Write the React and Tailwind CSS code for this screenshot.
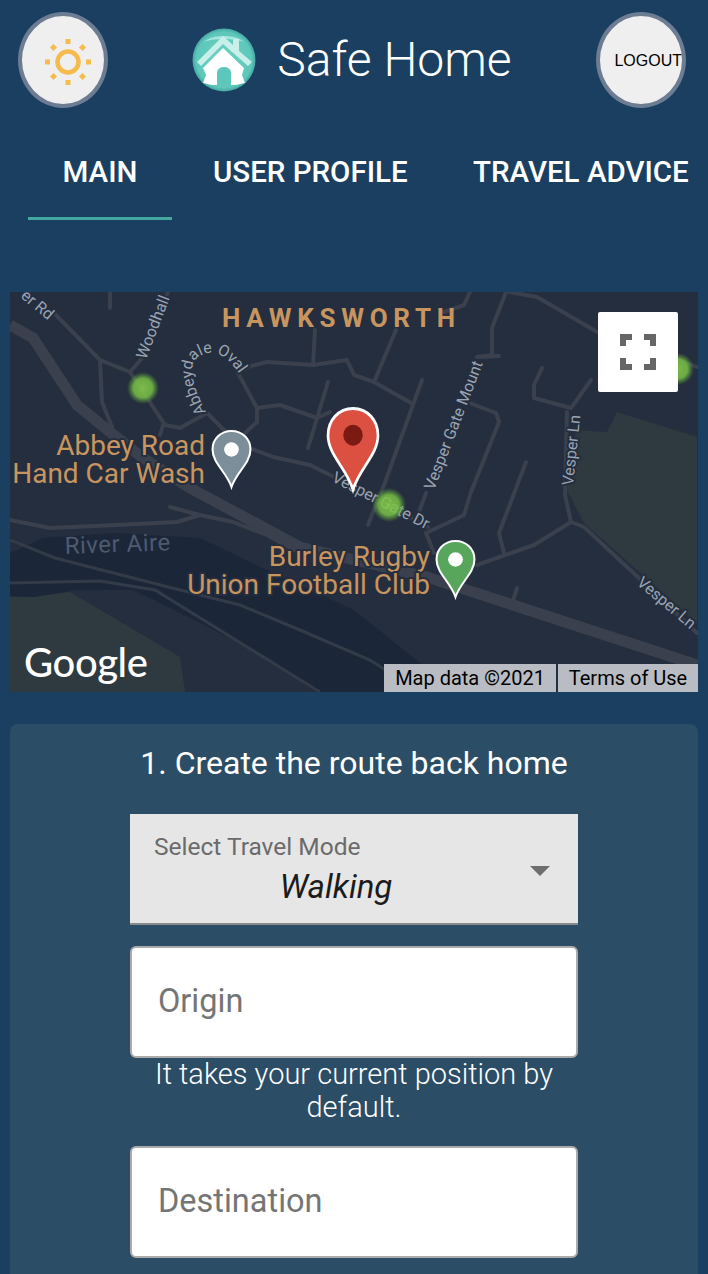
import React from 'react';

const roboto = "font-['Roboto',sans-serif]";

// thin street lines on the map, in page coordinates
const streets = [
  '53,312 100,360 130,372 165,425 180,428 207,413 227,433 250,448 273,457 310,465 330,475 372,497 428,527',
  '130,372 143,357 150,340 168,292',
  '100,360 102,402 112,427',
  '110,285 110,308',
  '163,425 160,435',
  '243,435 257,422 257,408 238,373 247,367 267,362 313,365 347,360 354,375 374,382 411,403',
  '315,330 313,365',
  '257,408 280,405 317,418 330,412',
  '328,382 308,448',
  '396,330 374,382',
  '422,380 384,485 368,525',
  '470,292 464,305 444,312',
  '506,292 492,328 492,355 477,357 499,356',
  '467,402 496,413 499,422 471,492 464,515 426,533 434,553',
  '526,462 499,533 504,553',
  '426,493 419,512',
  '509,292 537,297 599,333',
  '542,368 534,385 534,398 571,408 591,380',
  '567,412 565,495 571,522 584,527 641,580 697,633',
  '571,522 534,545 477,565',
  '517,588 511,607',
  '679,360 697,367',
  '10,520 50,528 117,525 177,522 200,515 170,507',
  '200,515 233,522 267,535 303,555',
];

const rails = [
  '10,540 55,558 180,590 240,605 300,630 370,660 420,692',
  '10,583 100,581 155,590 320,692',
];

function Marker({ x, y, w, h, fill, dot, r = 0.18 }) {
  // teardrop pin, drawn in a 40x58 box then scaled
  return (
    <g transform={`translate(${x} ${y}) scale(${w / 40} ${h / 58})`}>
      <path
        d="M20 1C9.5 1 1.5 9 1.5 19.5 1.5 33 15 42 20 57 25 42 38.500 33 38.500 19.500 38.500 9 30.500 1 20 1Z"
        fill={fill}
        stroke="#fff"
        strokeWidth="2"
      />
      <circle cx="20" cy="19.500" r={40 * r} fill={dot} />
    </g>
  );
}

function MapView() {
  const label = {
    paintOrder: 'stroke',
    stroke: '#252e3e',
    strokeWidth: 4,
    strokeLinejoin: 'round',
  };
  return (
    <div className="relative mx-[10px] h-[400px] overflow-hidden bg-[#252e3e]">
      <svg viewBox="10 292 688 400" className="block h-[400px] w-[688px] font-['Roboto',sans-serif]">
        <defs>
          <radialGradient id="heat">
            <stop offset="0" stopColor="#84c94c" stopOpacity="0.9" />
            <stop offset="0.6" stopColor="#78bf45" stopOpacity="0.85" />
            <stop offset="1" stopColor="#5aa53a" stopOpacity="0" />
          </radialGradient>
          <path id="oval" d="M206 412 C190 380 184 358 208 353 C224 351 236 366 250 392" />
        </defs>

        {/* parks */}
        <polygon points="10,597 33,597 70,592 180,657 185,692 10,692" fill="#2e3a40" />
        <polygon points="576,430 607,432 617,412 697,437 697,623 584,523 567,490" fill="#2e3a40" />
        {/* river */}
        <polygon
          points="10,553 43,538 117,533 200,538 267,570 354,610 420,663 470,692 320,692 267,657 200,623 133,590 77,590 33,597 10,596"
          fill="#1b2639"
        />

        {rails.map((p) => (
          <polyline key={p} points={p} fill="none" stroke="#333b49" strokeWidth="3" />
        ))}
        {/* main roads */}
        <polyline points="10,325 33,338 77,405 110,432 143,458 190,488 300,547 427,577 697,665" fill="none" stroke="#3a404d" strokeWidth="11" />
        {streets.map((p) => (
          <polyline key={p} points={p} fill="none" stroke="#3a404d" strokeWidth="4" strokeLinejoin="round" strokeLinecap="round" />
        ))}

        {/* street names */}
        <g fill="#9aa3b2" fontSize="16" style={label}>
          <text transform="translate(20 297) rotate(40)">er Rd</text>
          <text transform="translate(146 360) rotate(-69)">Woodhall</text>
          <text>
            <textPath href="#oval">Abbeydale Oval</textPath>
          </text>
          <text transform="translate(434 491) rotate(-69)">Vesper Gate Mount</text>
          <text transform="translate(573 486) rotate(-84)">Vesper Ln</text>
          <text transform="translate(331 481) rotate(27)">Vesper Gate Dr</text>
          <text transform="translate(636 584) rotate(40)">Vesper Ln</text>
        </g>
        <text transform="translate(65 554) rotate(-2)" fill="#4e5a6e" fontSize="24" letterSpacing="0.5">River Aire</text>

        {/* heatmap spots */}
        <circle cx="143" cy="388" r="16" fill="url(#heat)" />
        <circle cx="389" cy="505" r="17" fill="url(#heat)" />
        <circle cx="678" cy="369" r="16" fill="url(#heat)" />

        {/* place names */}
        <g fill="#c9955f" fontSize="28" textAnchor="end" style={label}>
          <text x="205" y="455">Abbey Road</text>
          <text x="205" y="483">Hand Car Wash</text>
          <text x="430" y="566">Burley Rugby</text>
          <text x="430" y="594">Union Football Club</text>
        </g>
        <text x="222" y="327" fill="#c9955f" fontSize="26" fontWeight="700" letterSpacing="5.7">HAWKSWORTH</text>

        <Marker x={211} y={430} w={41} h={58} fill="#7d8e9b" dot="#fff" />
        <Marker x={326} y={407} w={54} h={84} fill="#db5040" dot="#7a1a12" />
        <Marker x={435} y={540} w={41} h={58} fill="#58a65c" dot="#fff" />

        <text x="24" y="677" fill="#fff" fontSize="40" fontWeight="500" fontFamily="Lato, sans-serif" letterSpacing="-0.4">Google</text>
      </svg>

      {/* fullscreen control */}
      <button className="absolute left-[588px] top-[20px] flex h-[80px] w-[80px] items-center justify-center rounded-[2px] bg-white">
        <svg width="36" height="36" viewBox="0 0 36 36" fill="none" stroke="#666" strokeWidth="6">
          <path d="M3 12V3H12M24 3H33V12M3 24V33H12M24 33H33V24" />
        </svg>
      </button>

      {/* attribution */}
      <div className={`absolute bottom-0 right-0 flex h-[28px] gap-[2px] text-[20px] leading-[28px] text-black ${roboto}`}>
        <span className="w-[172px] bg-[#b9bcc3] text-center">Map data ©2021</span>
        <span className="w-[140px] bg-[#b9bcc3] text-center">Terms of Use</span>
      </div>
    </div>
  );
}

function Logo() {
  return (
    <svg width="64" height="64" viewBox="0 0 64 64">
      <defs>
        <radialGradient id="ball" cx="0.5" cy="0.5" r="0.52">
          <stop offset="0" stopColor="#6fd3c6" />
          <stop offset="0.85" stopColor="#5cc7ba" />
          <stop offset="1" stopColor="#3f9a98" />
        </radialGradient>
      </defs>
      <circle cx="32" cy="32" r="31.500" fill="url(#ball)" />
      <path d="M12 14C20 6 44 6 52 14 44 10 20 10 12 14Z" fill="#a6e6de" />
      <path d="M5 34 31 8 41 17V11H47V23L60 34 56 38 31 16 9 38Z" fill="#c9efe9" />
      <path d="M31 20 52 40 50 47 53 55 44 57 20 57 11 55 14 47 11 40Z" fill="#fff" />
      <path d="M25 60V45C25 37 39 37 39 45V60Z" fill="#5cc7ba" />
    </svg>
  );
}

function SunIcon() {
  return (
    <svg width="46" height="46" viewBox="0 0 46 46" fill="#f5bb4d">
      <circle cx="23" cy="23" r="10.500" fill="none" stroke="#f5bb4d" strokeWidth="4.500" />
      <rect x="20.500" y="0" width="5" height="5" />
      <rect x="20.500" y="41" width="5" height="5" />
      <rect x="0" y="20.500" width="5" height="5" />
      <rect x="41" y="20.500" width="5" height="5" />
      <rect x="6" y="6" width="5" height="5" transform="rotate(45 8.500 8.500)" />
      <rect x="35" y="6" width="5" height="5" transform="rotate(45 37.500 8.500)" />
      <rect x="6" y="35" width="5" height="5" transform="rotate(45 8.500 37.500)" />
      <rect x="35" y="35" width="5" height="5" transform="rotate(45 37.500 37.500)" />
    </svg>
  );
}

function App() {
  const inputCls = `block h-[112px] w-[448px] rounded-[6px] border-2 border-[#ababab] bg-white pb-[2px] pl-[26px] pr-[26px] text-[32.5px] text-[#222] placeholder:text-[#757575] ${roboto}`;

  return (
    <div className={`h-[1274px] w-[708px] overflow-hidden bg-[#1a3f60] ${roboto}`}>
      {/* Header */}
      <header className="flex h-[120px] items-start justify-between pl-[18px] pr-[22px] pt-[12px]">
        <button className="flex h-[96px] w-[90px] items-center justify-center rounded-[50%] border-4 border-[#6c7c93] bg-[#efefef]">
          <span className="ml-[9px] mt-[4px]">
            <SunIcon />
          </span>
        </button>
        <div className="mt-[16px] flex items-center gap-[21px]">
          <Logo />
          <span className="text-[48px] font-light leading-[64px] text-white">Safe Home</span>
        </div>
        <button className="flex h-[96px] w-[90px] items-center justify-end overflow-hidden rounded-[50%] border-4 border-[#6c7c93] bg-[#efefef] pt-[2px] font-['Liberation_Sans',sans-serif] text-[16px] text-black">
          LOGOUT
        </button>
      </header>

      {/* Tabs */}
      <nav className="flex h-[100px] text-[29.5px] font-medium leading-[104px] text-white">
        <div className="ml-[28px] h-[100px] w-[144px] border-b-[3px] border-[#43a99c] text-center">MAIN</div>
        <div className="ml-[41px] w-[194px] whitespace-nowrap">USER PROFILE</div>
        <div className="ml-[66px] whitespace-nowrap">TRAVEL ADVICE</div>
      </nav>

      <div className="h-[72px]" />
      <MapView />

      {/* Route form */}
      <section className="mx-[10px] mt-[32px] rounded-[8px] bg-[#2c4d66] pb-[40px] pt-[18px]">
        <h2 className="text-center text-[32px] font-normal leading-[42px] text-white">1. Create the route back home</h2>

        <div className="relative mx-auto mt-[30px] h-[111px] w-[448px] border-b-2 border-[#8a8a8a] bg-[#e6e6e6]">
          <div className="pl-[24px] pt-[18px] text-[24.5px] leading-[30px] text-[#6b6b6b]">Select Travel Mode</div>
          <div className="mt-[3px] pr-[36px] text-center text-[33px] italic leading-[44px] text-[#1c1c1c]">Walking</div>
          <span className="absolute right-[28px] top-[52px] h-0 w-0 border-x-[10px] border-t-[10px] border-x-transparent border-t-[#6e6e6e]" />
        </div>

        <input className={`mx-auto mt-[21px] ${inputCls}`} placeholder="Origin" />
        <p className="mx-auto w-[448px] text-center text-[29px] font-light leading-[33px] text-white">
          It takes your current position by default.
        </p>
        <input className={`mx-auto mt-[22px] ${inputCls}`} placeholder="Destination" />
      </section>
    </div>
  );
}

export default App;
